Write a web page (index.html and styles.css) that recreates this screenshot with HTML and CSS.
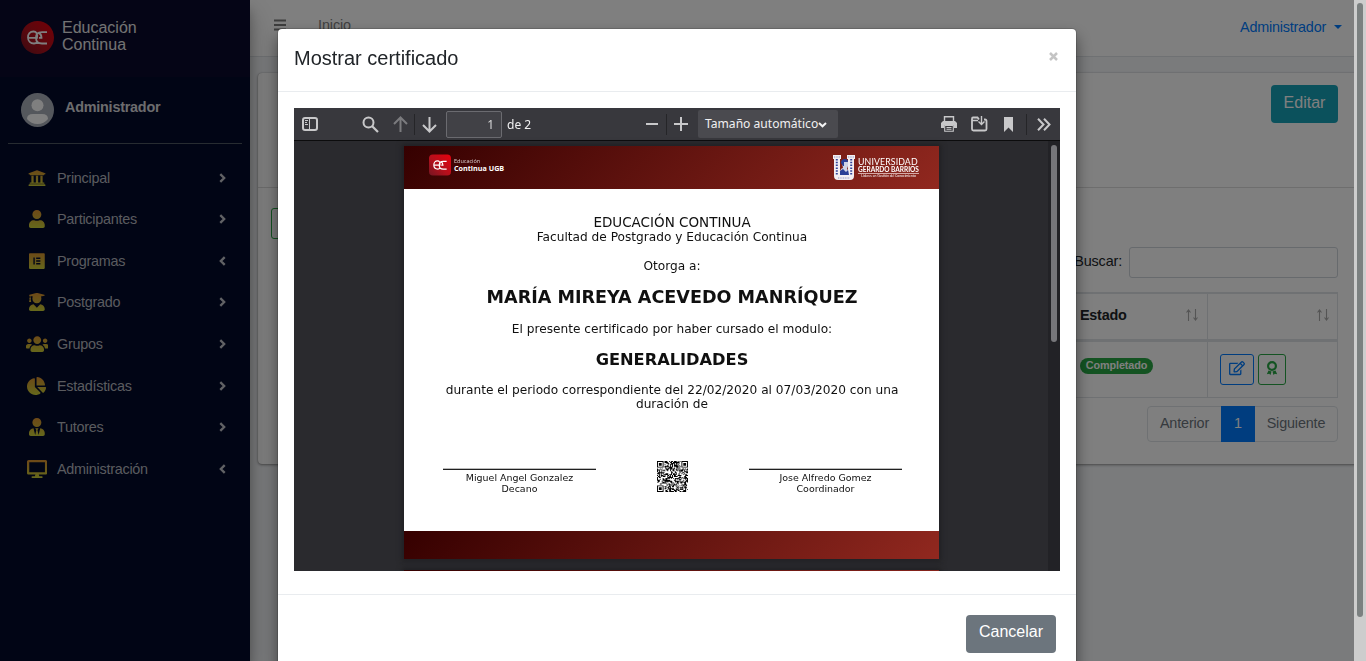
FILE: index.html
```html
<!DOCTYPE html>
<html lang="es">
<head>
<meta charset="utf-8">
<title>Educación Continua</title>
<link rel="stylesheet" href="styles.css">
</head>
<body>
<svg class="defs" width="0" height="0">
  <linearGradient id="gold" gradientUnits="userSpaceOnUse" x1="0" y1="0" x2="0" y2="512"><stop offset="0" stop-color="#dc9230"/><stop offset=".4" stop-color="#d2a832"/><stop offset="1" stop-color="#ccd238"/></linearGradient>
  <linearGradient id="red" x1="0" y1="1" x2="1" y2="0"><stop offset="0" stop-color="#741522"/><stop offset=".45" stop-color="#b4101c"/><stop offset="1" stop-color="#e9000d"/></linearGradient>
  <symbol id="ec" viewBox="0 0 22 17"><path d="M2 8.800H10.500C11.300 4.500 9.500 2.500 7 2.500C3.500 2.500 1.500 5 1.500 8.500S4 14.500 7.500 14.500Q9.500 14.500 10.800 13.200M20.500 3.200H15.500C11.500 3.200 9.500 5.500 9.500 8.700S11.500 14.500 15.500 14.500H20.500M12.500 8.800H15Q15 5 12 3.600" fill="none" stroke="#fff" stroke-width="1.800"/></symbol>
</svg>

<div class="app">
  <aside class="sidebar">
    <div class="brand">
      <svg class="brand-logo" viewBox="0 0 33 33"><circle cx="16.500" cy="16.500" r="16.500" fill="url(#red)"/><use href="#ec" x="5.500" y="8" width="22" height="17"/></svg>
      <span class="brand-name">Educación<br>Continua</span>
    </div>
    <div class="user">
      <svg class="avatar" viewBox="0 0 33 34"><ellipse cx="16.500" cy="17" rx="16.500" ry="17" fill="#a9afb9"/><circle cx="16.500" cy="12.300" r="6" fill="#fff"/><path d="M6 26Q6 21 12 21H21Q27 21 27 26Q23 31 16.500 31T6 26Z" fill="#fff"/></svg>
      <b class="user-name">Administrador</b>
    </div>
    <nav class="menu">
      <a class="item"><span class="ico"><svg width="18" height="18" viewBox="0 0 512 512"><path d="M496 128v16a8 8 0 0 1-8 8h-24v12c0 6.627-5.373 12-12 12H60c-6.627 0-12-5.373-12-12v-12H24a8 8 0 0 1-8-8v-16a8 8 0 0 1 4.941-7.392l232-88a7.996 7.996 0 0 1 6.118 0l232 88A8 8 0 0 1 496 128zm-24 304H40c-13.255 0-24 10.745-24 24v16a8 8 0 0 0 8 8h464a8 8 0 0 0 8-8v-16c0-13.255-10.745-24-24-24zM96 192v192H60c-6.627 0-12 5.373-12 12v20h416v-20c0-6.627-5.373-12-12-12h-36V192h-64v192h-64V192h-64v192h-64V192H96z"/></svg></span><span class="label">Principal</span><svg class="chev" viewBox="0 0 6 9"><path d="M1 1l3.500 3.500L1 8"/></svg></a>
      <a class="item"><span class="ico"><svg width="15.750" height="18" viewBox="0 0 448 512"><path d="M224 256c70.700 0 128-57.300 128-128S294.700 0 224 0 96 57.300 96 128s57.300 128 128 128zm89.600 32h-16.700c-22.200 10.200-46.900 16-72.900 16s-50.600-5.800-72.900-16h-16.700C60.200 288 0 348.200 0 422.400V464c0 26.500 21.500 48 48 48h352c26.500 0 48-21.500 48-48v-41.600c0-74.200-60.200-134.400-134.400-134.400z"/></svg></span><span class="label">Participantes</span><svg class="chev" viewBox="0 0 6 9"><path d="M1 1l3.500 3.500L1 8"/></svg></a>
      <a class="item"><span class="ico"><svg width="15.750" height="18" viewBox="0 0 448 512"><path d="M425.600 32H22.400C10 32 0 42 0 54.400v403.200C0 470 10 480 22.400 480h403.200c12.400 0 22.400-10 22.400-22.400V54.400C448 42 438 32 425.600 32M164.300 355.500h-39.800v-199h39.800v199zm159.300 0H204.100v-39.800h119.500v39.800zm0-79.600H204.100v-39.800h119.500v39.800zm0-79.700H204.100v-39.800h119.500v39.800z"/></svg></span><span class="label">Programas</span><svg class="chev" viewBox="0 0 6 9"><path d="M5 1L1.500 4.500 5 8"/></svg></a>
      <a class="item"><span class="ico"><svg width="15.750" height="18" viewBox="0 0 448 512"><path d="M319.400 320.600L224 416l-95.400-95.400C57.100 323.700 0 382.200 0 454.400v9.600c0 26.500 21.500 48 48 48h352c26.500 0 48-21.500 48-48v-9.600c0-72.200-57.100-130.700-128.600-133.800zM13.600 79.800l6.400 1.500v58.400c-7 4.200-12 11.500-12 20.300 0 8.400 4.600 15.400 11.100 19.700L3.500 242c-1.700 6.900 2.100 14 7.600 14h41.800c5.500 0 9.300-7.100 7.600-14l-15.600-62.300C51.400 175.400 56 168.400 56 160c0-8.800-5-16.100-12-20.300V87.100l66 15.900c-8.600 17.200-14 36.400-14 57 0 70.700 57.300 128 128 128s128-57.300 128-128c0-20.600-5.300-39.800-14-57l96.300-23.200c18.200-4.400 18.200-27.100 0-31.500l-190.400-46c-13-3.100-26.700-3.100-39.700 0L13.600 48.200c-18.100 4.400-18.100 27.200 0 31.600z"/></svg></span><span class="label">Postgrado</span><svg class="chev" viewBox="0 0 6 9"><path d="M1 1l3.500 3.500L1 8"/></svg></a>
      <a class="item"><span class="ico"><svg width="22.500" height="18" viewBox="0 0 640 512"><path d="M96 224c35.300 0 64-28.700 64-64s-28.700-64-64-64-64 28.700-64 64 28.700 64 64 64zm448 0c35.300 0 64-28.700 64-64s-28.700-64-64-64-64 28.700-64 64 28.700 64 64 64zm32 32h-64c-17.600 0-33.500 7.100-45.100 18.600 40.300 22.100 68.900 62 75.100 109.400h66c17.700 0 32-14.300 32-32v-32c0-35.300-28.700-64-64-64zm-256 0c61.900 0 112-50.100 112-112S381.900 32 320 32 208 82.100 208 144s50.100 112 112 112zm76.800 32h-8.300c-20.800 10-43.900 16-68.500 16s-47.600-6-68.500-16h-8.300C179.600 288 128 339.600 128 403.200V432c0 26.500 21.500 48 48 48h288c26.500 0 48-21.500 48-48v-28.800c0-63.600-51.600-115.200-115.200-115.200zm-223.700-13.400C161.500 263.100 145.600 256 128 256H64c-35.300 0-64 28.700-64 64v32c0 17.700 14.300 32 32 32h65.900c6.300-47.400 34.900-87.300 75.200-109.400z"/></svg></span><span class="label">Grupos</span><svg class="chev" viewBox="0 0 6 9"><path d="M1 1l3.500 3.500L1 8"/></svg></a>
      <a class="item"><span class="ico"><svg width="19.100" height="18" viewBox="0 0 544 512"><path d="M527.790 288H290.500l158.030 158.030c6.040 6.040 15.980 6.530 22.190.68 38.700-36.460 65.320-85.610 73.130-140.860 1.340-9.460-6.510-17.850-16.060-17.850zm-15.830-64.800C503.720 103.740 408.260 8.280 288.800.04 279.680-.59 272 7.100 272 16.240V240h223.770c9.140 0 16.820-7.680 16.190-16.800zM224 288V50.710c0-9.550-8.390-17.400-17.840-16.060C86.990 51.490-4.100 155.600.14 280.370 4.500 408.510 114.830 513.590 243.030 511.980c50.400-.63 96.970-16.870 135.260-44.030 7.900-5.600 8.420-17.230 1.570-24.080L224 288z"/></svg></span><span class="label">Estadísticas</span><svg class="chev" viewBox="0 0 6 9"><path d="M1 1l3.500 3.500L1 8"/></svg></a>
      <a class="item"><span class="ico"><svg width="15.750" height="18" viewBox="0 0 448 512"><path d="M224 256c70.700 0 128-57.300 128-128S294.700 0 224 0 96 57.300 96 128s57.300 128 128 128zm95.800 32.600L272 480l-32-136 32-56h-96l32 56-32 136-47.800-191.400C56.900 292 0 350.300 0 422.400V464c0 26.500 21.500 48 48 48h352c26.500 0 48-21.500 48-48v-41.600c0-72.100-56.900-130.400-128.200-133.800z"/></svg></span><span class="label">Tutores</span><svg class="chev" viewBox="0 0 6 9"><path d="M1 1l3.500 3.500L1 8"/></svg></a>
      <a class="item"><span class="ico"><svg width="20.200" height="18" viewBox="0 0 576 512"><path d="M528 0H48C21.500 0 0 21.500 0 48v320c0 26.500 21.500 48 48 48h192l-16 48h-72c-13.300 0-24 10.700-24 24s10.700 24 24 24h272c13.300 0 24-10.700 24-24s-10.700-24-24-24h-72l-16-48h192c26.500 0 48-21.500 48-48V48c0-26.500-21.500-48-48-48zm-16 352H64V64h448v288z"/></svg></span><span class="label">Administración</span><svg class="chev" viewBox="0 0 6 9"><path d="M5 1L1.500 4.500 5 8"/></svg></a>
    </nav>
  </aside>

  <main class="main">
    <header class="topbar">
      <svg class="burger" viewBox="0 0 12 12"><path d="M0 1.500h12M0 6h12M0 10.500h12" stroke="#7b7b7b" stroke-width="2"/></svg>
      <span class="home">Inicio</span>
      <span class="account">Administrador<i class="caret"></i></span>
    </header>
    <section class="card">
      <div class="card-head"><button class="btn edit">Editar</button></div>
      <div class="card-body">
        <div class="new-btn"></div>
        <div class="search"><label>Buscar:</label><div class="search-input"></div></div>
        <div class="table">
          <div class="cell th"><b class="state">Estado</b><svg class="sort" viewBox="0 0 12 12"><path d="M2.500 12V1M.5 3.500l2-2.500 2 2.500M9.500 0v11M7.500 8.500l2 2.500 2-2.500"/></svg></div>
          <div class="cell th"><svg class="sort" viewBox="0 0 12 12"><path d="M2.500 12V1M.5 3.500l2-2.500 2 2.500M9.500 0v11M7.500 8.500l2 2.500 2-2.500"/></svg></div>
          <div class="cell td"><span class="badge">Completado</span></div>
          <div class="cell td actions">
            <span class="act blue"><svg width="16" height="14.200" viewBox="0 0 576 512"><path fill="#007bff" d="M402.300 344.900l32-32c5-5 13.700-1.500 13.700 5.700V464c0 26.500-21.500 48-48 48H48c-26.500 0-48-21.500-48-48V112c0-26.500 21.500-48 48-48h273.500c7.100 0 10.700 8.600 5.700 13.700l-32 32c-1.500 1.500-3.500 2.300-5.700 2.300H48v352h352V350.500c0-2.100.8-4.100 2.300-5.600zm156.600-201.800L296.300 405.700l-90.400 10c-26.200 2.900-48.500-19.200-45.600-45.600l10-90.400L432.900 17.100c22.900-22.900 59.900-22.900 82.700 0l43.200 43.200c22.900 22.900 22.900 60 .1 82.800zM460.100 174L402 115.900 216.200 301.800l-7.300 65.300 65.300-7.300L460.100 174zm64.800-79.700l-43.200-43.200c-4.100-4.100-10.800-4.100-14.800 0L436 82l58.100 58.100 30.900-30.900c4-4.200 4-10.800-.1-14.900z"/></svg></span>
            <span class="act green"><svg width="12" height="15" viewBox="0 0 12 15"><circle cx="6" cy="5" r="3.900" fill="none" stroke="#28a745" stroke-width="2.200"/><path d="M2.500 9.500L5.500 10.500 4.500 14 3.200 12.800.8 13.300ZM9.500 9.500L6.500 10.500 7.500 14 8.800 12.800 11.200 13.300Z" fill="#28a745"/></svg></span>
          </div>
        </div>
        <div class="pager"><span class="page prev">Anterior</span><span class="page active">1</span><span class="page next">Siguiente</span></div>
      </div>
    </section>
  </main>
</div>

<div class="backdrop">
  <div class="modal">
    <div class="modal-head"><h5 class="title">Mostrar certificado</h5><svg class="close" viewBox="0 0 9 9"><path d="M1 1l7 7M8 1L1 8"/></svg></div>
    <div class="modal-body">
      <div class="pdf">
        <div class="tools">
          <svg class="tool t-side" width="16" height="14" viewBox="0 0 16 14"><rect x="1" y="1" width="14" height="12" rx="2" fill="none" stroke="#c8c8ca" stroke-width="2"/><path d="M7.500 1v12M3 3.500h3M3 5.500h2M3 7.500h3" stroke="#c8c8ca" fill="none"/></svg>
          <svg class="tool t-find" width="17" height="17" viewBox="0 0 17 17"><circle cx="6.500" cy="6.500" r="5" fill="none" stroke="#c8c8ca" stroke-width="2"/><path d="M10 10l6 6" stroke="#c8c8ca" stroke-width="2.200"/></svg>
          <svg class="tool t-up" width="15" height="17" viewBox="0 0 15 17"><path d="M7.500 16V2M1 8l6.500-6.500L14 8" fill="none" stroke="#7b7b7e" stroke-width="2"/></svg>
          <i class="sep s1"></i>
          <svg class="tool t-down" width="15" height="17" viewBox="0 0 15 17"><path d="M7.500 1v14M1 9l6.500 6.500L14 9" fill="none" stroke="#c8c8ca" stroke-width="2"/></svg>
          <span class="page-no">1</span><span class="page-of">de 2</span>
          <svg class="tool t-minus" width="12" height="12" viewBox="0 0 12 12"><path d="M0 6h12" stroke="#c8c8ca" stroke-width="2"/></svg>
          <i class="sep s2"></i>
          <svg class="tool t-plus" width="14" height="14" viewBox="0 0 14 14"><path d="M0 7h14M7 0v14" stroke="#c8c8ca" stroke-width="2"/></svg>
          <span class="zoom">Tamaño automático<svg width="9" height="6" viewBox="0 0 9 6"><path d="M1 1l3.500 3.300L8 1" fill="none" stroke="#f4f4f5" stroke-width="2"/></svg></span>
          <svg class="tool t-print" width="16" height="16" viewBox="0 0 16 16"><path d="M3.500 6V.7h9V6" fill="none" stroke="#c8c8ca" stroke-width="1.400"/><path d="M2 5h12l2 2v5h-3V9H3v3H0V7Z" fill="#c8c8ca"/><path d="M3.700 9.500h8.600v5.800H3.700zM5.500 11.500h5M5.500 13.300h5" fill="none" stroke="#c8c8ca" stroke-width="1.100"/></svg>
          <svg class="tool t-save" width="17" height="16" viewBox="0 0 17 16"><path d="M8 3.500L6.500 1.500H2Q1 1.500 1 3V13Q1 14.500 2.500 14.500H14Q15.500 14.500 15.500 13V5Q15.500 3.500 14 3.500H13" fill="none" stroke="#c8c8ca" stroke-width="1.800"/><path d="M10.500 0v8M7.500 5.500l3 3 3-3M1 4.500h6" fill="none" stroke="#c8c8ca" stroke-width="1.400"/></svg>
          <svg class="tool t-mark" width="9" height="15" viewBox="0 0 9 15"><path d="M0 0h9v15L4.500 10.500 0 15Z" fill="#c8c8ca"/></svg>
          <i class="sep s3"></i>
          <svg class="tool t-more" width="14" height="13" viewBox="0 0 14 13"><path d="M1 .8l5.500 5.700L1 12.200M7 .8l5.500 5.700L7 12.200" fill="none" stroke="#c8c8ca" stroke-width="2"/></svg>
        </div>
        <div class="viewer">
          <div class="sheets">
            <article class="sheet">
              <header class="band">
                <svg class="mini-logo" viewBox="0 0 23 22"><rect width="23" height="22" rx="4" fill="url(#red)"/><use href="#ec" x="4" y="5" width="15.500" height="12"/></svg>
                <span class="mini-name"><small>Educación</small><b>Continua UGB</b></span>
                <svg class="crest" viewBox="0 0 22 26"><path d="M0 0h8v4H7v14q0 2 2 2h4q2 0 2-2V4h-1V0h8v4h-1v17q0 4-4 4H5q-4 0-4-4V4H0Z" fill="#f2eef2"/><path d="M3.800 4v16M18.200 4v16" stroke="#33459a" stroke-width="2" stroke-dasharray="1.500 1.300"/><path d="M1 2h6M15 2h6M5 23h12" stroke="#8d94c0" stroke-width="1" stroke-dasharray="1 .7"/><path d="M7 20V16q1-3 3-3-2-7 2-8 4 0 3 6l-1 3 2 2v4Z" fill="#cfd3e6"/><path d="M8 8q0-4 4-4 3 0 3 3l-4 0v4l-1 0ZM7 20v-4l3-2 3 3 2-2 1 5Z" fill="#2a3f96"/></svg>
                <span class="uni"><span class="uni-a">UNIVERSIDAD</span><b class="uni-b">GERARDO BARRIOS</b><span class="uni-c">Líderes en Gestión del Conocimiento</span></span>
              </header>
              <div class="cert">
                <div class="c1"><span>EDUCACIÓN CONTINUA</span></div>
                <div class="c2">Facultad de Postgrado y Educación Continua</div>
                <div class="c3">Otorga a:</div>
                <div class="c4">MARÍA MIREYA ACEVEDO MANRÍQUEZ</div>
                <div class="c5">El presente certificado por haber cursado el modulo:</div>
                <div class="c6">GENERALIDADES</div>
                <div class="c7">durante el periodo correspondiente del 22/02/2020 al 07/03/2020 con una<br>duración de</div>
                <div class="signs">
                  <div class="sign">Miguel Angel Gonzalez<br>Decano</div>
                  <svg class="qr" id="qr" viewBox="0 0 33 33"></svg>
                  <div class="sign">Jose Alfredo Gomez<br>Coordinador</div>
                </div>
              </div>
              <footer class="band foot"></footer>
            </article>
            <div class="sheet next-sheet"></div>
          </div>
          <div class="track"><div class="thumb"></div></div>
        </div>
      </div>
    </div>
    <div class="modal-foot"><button class="btn cancel">Cancelar</button></div>
  </div>
  <div class="page-scroll"><div class="page-thumb"></div></div>
</div>
<script src="qr.js"></script>
</body>
</html>
```
FILE: styles.css
```css
* { box-sizing: border-box; }
body { margin: 0; height: 661px; overflow: hidden; font-family: "Liberation Sans", Arial, sans-serif; color: #212529; font-size: 14.400px; }
.defs { position: absolute; }
svg { display: block; flex: none; }
.app { display: flex; width: 1366px; height: 661px; background: #f4f6f9; }

.sidebar { width: 250px; flex: none; background: #030a2b; box-shadow: 0 14px 28px rgba(0,0,0,.25), 0 10px 10px rgba(0,0,0,.22); z-index: 1; }
.brand { height: 77px; padding: 19px 21px; display: flex; gap: 8px; background: #0a0a2c; color: #e6e6e6; }
.brand-logo { width: 33px; height: 33px; margin-top: 2px; }
.brand-name { font-size: 16px; line-height: 17px; }
.user { height: 67px; margin: 0 8px; padding: 16px 13px; display: flex; gap: 11px; border-bottom: 1px solid #4f5962; }
.avatar { width: 33px; height: 34px; }
.user-name { color: #d8d8dc; font-size: 14.400px; line-height: 29px; letter-spacing: -.23px; }
.menu { padding: 13px 0 0 21px; }
.item { display: flex; align-items: center; height: 41.560px; color: #b4b7be; }
.ico { width: 32px; display: flex; justify-content: center; }
.ico svg { fill: url(#gold); }
.label { width: 162px; margin-left: 4px; letter-spacing: -.25px; }
.chev { width: 7px; height: 10px; fill: none; stroke: #c2c4ca; stroke-width: 2.100; }

.main { flex: 1; min-width: 0; }
.topbar { height: 57px; background: #fff; border-bottom: 1px solid #dee2e6; display: flex; align-items: flex-start; padding: 15px 24px 0; }
.burger { width: 12px; height: 12px; margin-top: 4px; }
.home { margin-left: 32px; color: #808080; line-height: 20px; letter-spacing: -.1px; }
.account { margin-left: auto; color: #007bff; line-height: 24px; display: flex; align-items: center; gap: 8px; letter-spacing: -.22px; }
.caret { border: 4px solid transparent; border-top-color: #007bff; border-bottom: 0; }
.card { margin: 16px 0 0 8px; height: 391px; background: #fff; border-radius: 4px; box-shadow: 0 0 1px rgba(0,0,0,.3), 0 1px 3px rgba(0,0,0,.4); }
.card-head { height: 115px; padding: 12px 28px; display: flex; justify-content: flex-end; border-bottom: 1px solid #dcdcdc; }
.btn { height: 38px; border: 0; border-radius: 4px; color: #fff; font: 16px/1 "Liberation Sans", Arial, sans-serif; padding: 0 0 3px; }
.edit { width: 67px; background: #17a2b8; color: #fff; }
.card-body { padding: 20px 28px 0 13px; display: flex; flex-direction: column; align-items: flex-end; }
.new-btn { align-self: flex-start; width: 90px; height: 31px; border: 1px solid #28a745; border-radius: 3px; }
.search { display: flex; align-items: center; gap: 7px; margin-top: 8px; }
.search label { padding-bottom: 3px; letter-spacing: -.15px; }
.search-input { width: 209px; height: 31px; border: 1px solid #ced4da; border-radius: 3px; }
.table { display: grid; grid-template-columns: 140px 131px; width: 271px; margin-top: 14px; border-top: 1px solid #dee2e6; border-right: 1px solid #dee2e6; }
.cell { border: 0 solid #dee2e6; border-bottom-width: 1px; display: flex; }
.cell:nth-child(even) { border-left-width: 1px; }
.th { height: 49px; border-top-width: 1px; border-bottom-width: 3px; padding: 0 9px 3px 13px; align-items: center; }
.state { letter-spacing: -.25px; font-size: 14.400px; }
.sort { width: 12px; height: 12px; margin-left: auto; fill: none; stroke: #aaa; stroke-width: 1.100; }
.td { height: 56px; padding: 16px 13px; }
.badge { height: 16px; width: 73px; border-radius: 8px; background: #28a745; color: #fff; font-weight: bold; font-size: 10.800px; line-height: 14px; letter-spacing: -.1px; text-align: center; }
.actions { padding: 12px; gap: 4px; }
.act { height: 31px; border: 1px solid #007bff; border-radius: 3px; display: flex; align-items: center; justify-content: center; padding-bottom: 2px; }
.blue { width: 34px; }
.green { width: 28px; border-color: #28a745; }
.pager { display: flex; height: 36px; margin-top: 8px; border: 1px solid #dee2e6; border-radius: 4px; color: #6c757d; width: 191px; }
.page { line-height: 33px; text-align: center; letter-spacing: -.15px; }
.prev { width: 73px; }
.next { flex: 1; }
.active { width: 34px; margin: -1px 0; line-height: 35px; background: #007bff; color: #fff; }

.backdrop { position: fixed; inset: 0; background: rgba(0,0,0,.5); display: flex; z-index: 5; }
.modal { width: 798px; height: 643px; margin: 29px 278px 0; background: #fff; border-radius: 4px; box-shadow: 0 0 0 1px rgba(0,0,0,.15), 0 8px 16px rgba(0,0,0,.5); }
.modal-head { height: 63px; padding: 16px; display: flex; border-bottom: 1px solid #e9ecef; }
.title { margin: 0; font-weight: normal; font-size: 20px; line-height: 27px; letter-spacing: 0; }
.close { width: 9px; height: 9px; margin: 7px 2px 0 auto; stroke: #c4c4c4; stroke-width: 2.500; }
.modal-body { height: 502px; padding: 16px; }
.pdf { width: 766px; height: 463px; background: #2a2a2e; font-family: "Noto Sans", sans-serif; overflow: hidden; }
.tools { height: 33px; background: #38383d; border-bottom: 1px solid #0c0c0d; display: flex; align-items: center; padding-left: 8px; color: #f0f0f1; font-size: 12px; }
.sep { width: 1px; height: 21px; background: #252528; }
.t-find { margin-left: 44px; }
.t-up { margin-left: 14px; }
.s1 { margin-left: 6px; }
.t-down { margin-left: 7px; }
.page-no { width: 56px; height: 27px; margin-left: 9px; background: #414146; border: 1px solid #6b6b70; border-radius: 2px; text-align: right; padding-right: 7px; line-height: 26px; color: #d8d8d8; }
.page-of { width: 30px; margin-left: 5px; white-space: nowrap; }
.t-minus { margin-left: 109px; }
.s2 { margin-left: 8px; }
.t-plus { margin-left: 7px; }
.zoom { width: 140px; height: 28px; margin-left: 10px; background: #4a4a4f; border-radius: 2px; display: flex; align-items: center; padding: 0 0 2px 7px; gap: 0; white-space: nowrap; font-size: 12.100px; }
.zoom svg { margin-top: 3px; }
.t-print { margin-left: 103px; }
.t-save { margin-left: 14px; }
.t-mark { margin-left: 16px; }
.s3 { margin-left: 13px; }
.t-more { margin-left: 10px; }
.viewer { height: 430px; display: flex; }
.sheets { width: 754px; padding: 5px 109px 0 110px; }
.sheet { width: 535px; height: 413px; background: #fff; box-shadow: 0 0 5px 2px #202023; color: #101010; display: flex; flex-direction: column; }
.band { height: 43px; flex: none; background: linear-gradient(135deg, #350000, #91281f); display: flex; padding: 8px 20px 0 25px; color: #fff; }
.foot { height: 28px; margin-top: auto; }
.next-sheet { margin-top: 11px; background: linear-gradient(100deg, #350000, #91281f); }
.mini-logo { width: 22px; height: 22px; }
.mini-name { margin: 4px auto 0 3px; display: flex; flex-direction: column; font-family: "Open Sans", sans-serif; }
.mini-name small { font-size: 5.500px; line-height: 6px; opacity: .8; }
.mini-name b { font-size: 7.200px; line-height: 8px; white-space: nowrap; }
.crest { width: 22px; height: 26px; margin-top: 1px; }
.uni { width: 61px; margin: 3px 0 0 3px; font-family: Lato, sans-serif; white-space: nowrap; }
.uni span, .uni b { display: block; }
.uni-a { font-size: 8.800px; line-height: 9px; letter-spacing: .1px; }
.uni-b { font-size: 6.500px; line-height: 7px; border-bottom: 1px solid #d5aaa7; height: 8px; }
.uni-c { font-size: 3.400px; line-height: 5px; text-align: center; }
.cert { font-family: "DejaVu Sans", sans-serif; text-align: center; font-size: 12.170px; line-height: 14px; padding: 26px 0 0 1px; }
.c1 { font-size: 13.500px; }
.c2 { margin-top: 1px; }
.c3 { margin-top: 15px; }
.c4 { font-weight: bold; font-size: 17.580px; line-height: 20px; margin-top: 14px; }
.c5 { margin-top: 15px; }
.c6 { font-weight: bold; font-size: 16.230px; line-height: 20px; margin-top: 14px; }
.c7 { margin-top: 13px; }
.signs { display: flex; justify-content: space-between; padding: 0 37px 0 38px; margin-top: 50px; }
.sign { width: 153px; height: 30px; margin-top: 8px; border-top: 1px solid #202020; box-shadow: 0 -1px 0 #bbb; padding-top: 2px; font-size: 9.460px; line-height: 11px; }
.qr { width: 31px; height: 31px; }
.track { width: 12px; background: #222226; padding: 4px 3px; }
.thumb { width: 6px; height: 197px; border-radius: 3px; background: #76767a; }
.modal-foot { border-top: 1px solid #e9ecef; padding: 20px; display: flex; justify-content: flex-end; }
.cancel { width: 90px; background: #6c757d; padding-bottom: 5px; }
.page-scroll { width: 12px; flex: none; background: #cdcdcd; padding: 3px; }
.page-thumb { width: 6px; height: 614px; border-radius: 3px; background: #7b8080; }
```
FILE: qr.js
```js
// Builds the code's modules: three finder squares and a data field.
const size = 33;
let seed = 4;
let d = "";
const finder = (x, y) => {
  const dx = Math.abs(x - 3), dy = Math.abs(y - 3);
  const r = Math.max(dx, dy);
  return r !== 2 && r < 4;
};
for (let y = 0; y < size; y++) {
  for (let x = 0; x < size; x++) {
    seed = (seed * 1103515245 + 12345) % 2147483648;
    let on = (seed >> 16) % 100 < 52;
    if (x < 8 && y < 8) on = finder(x, y);
    else if (x > 24 && y < 8) on = finder(x - 26, y);
    else if (x < 8 && y > 24) on = finder(x, y - 26);
    if (on) d += `M${x} ${y}h1v1h-1z`;
  }
}
const path = document.createElementNS("http://www.w3.org/2000/svg", "path");
path.setAttribute("d", d);
document.getElementById("qr").appendChild(path);
```
